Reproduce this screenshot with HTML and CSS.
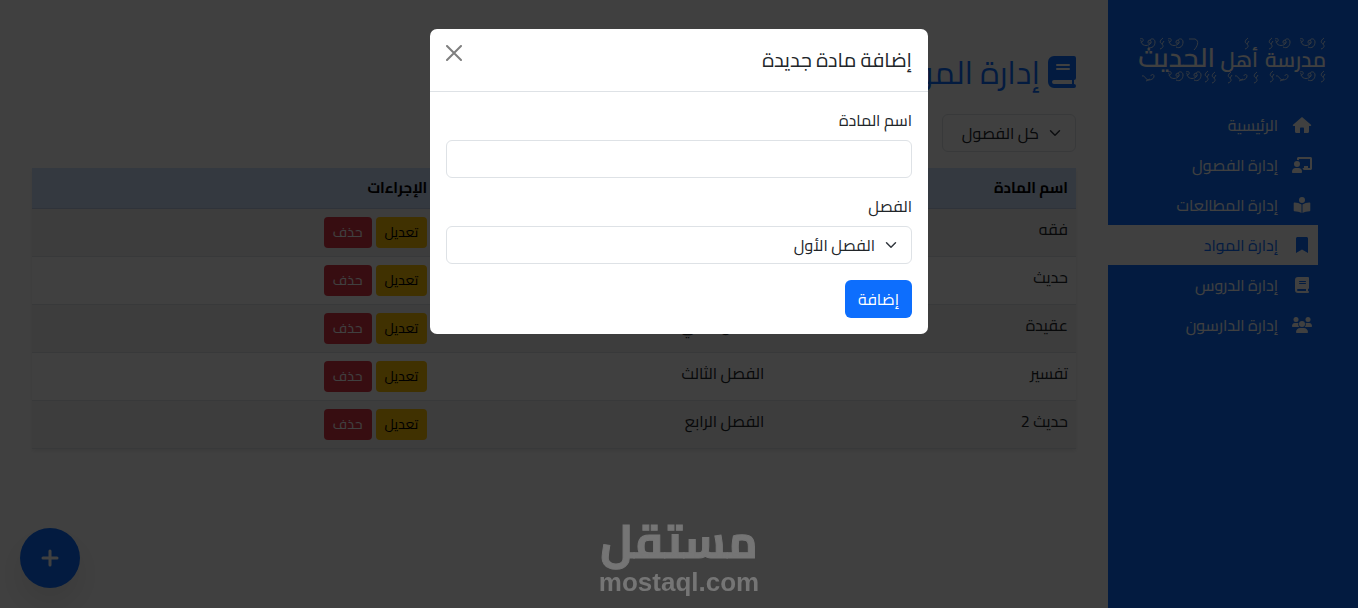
FILE: index.html
```html
<!DOCTYPE html>
<html lang="ar" dir="rtl">
<head>
    <meta charset="UTF-8">
    <meta name="viewport" content="width=device-width, initial-scale=1.0">
    <title>إدارة المواد</title>
    <link rel="stylesheet" href="styles.css">
</head>
<body>
    <div class="layout">
        <!-- Sidebar -->
        <aside class="sidebar">
            <svg class="brand" viewBox="0 0 190 50" role="img" aria-label="مدرسة أهل الحديث">
                <defs>
                    <g id="scroll">
                        <path d="M1 1c2-1 4 0 3 2s-3 0-2-1M2 4c2 5 8 4 10 1 1-3-3-4-3-1 0 2 2 2 2 0M9 9c4 2 7-1 7-5 0-4-5-4-5-1"/>
                    </g>
                    <g id="leaf">
                        <path d="M4 0C0 3 1 5 3 6c2 2 1 4-2 5M3 6l2-3"/>
                    </g>
                    <g id="swash">
                        <path d="M0 3c3-1 3 3 6 4 3 0 6-1 6-4 0-2-3-2-3 0M4 8l4-2"/>
                    </g>
                </defs>
                <g class="brand-text">
                    <text x="188" y="31">مدرسة</text>
                    <text x="120" y="31">أهل</text>
                    <text x="77" y="31" class="brand-wide">الحديث</text>
                </g>
                <g class="brand-lines">
                    <use href="#scroll" x="1" y="2"/>
                    <use href="#leaf" x="21" y="2"/>
                    <use href="#scroll" x="29" y="2"/>
                    <path d="M51 3h6c5 2 2 8-1 11"/>
                    <use href="#leaf" x="106" y="2"/>
                    <use href="#leaf" x="130" y="2"/>
                    <use href="#scroll" x="136" y="2"/>
                    <use href="#scroll" x="161" y="2"/>
                    <use href="#leaf" x="182" y="2"/>
                    <use href="#swash" x="4" y="37"/>
                    <use href="#scroll" x="29" y="35"/>
                    <use href="#scroll" x="47" y="35"/>
                    <use href="#leaf" x="66" y="35"/>
                    <use href="#leaf" x="73" y="36"/>
                    <use href="#leaf" x="89" y="36"/>
                    <use href="#swash" x="97" y="37"/>
                    <use href="#leaf" x="115" y="36"/>
                    <use href="#leaf" x="131" y="35"/>
                    <use href="#swash" x="138" y="37"/>
                    <use href="#scroll" x="161" y="35"/>
                    <use href="#leaf" x="182" y="35"/>
                </g>
            </svg>
            <nav>
                <ul class="menu">
                    <li>
                        <a href="#">
                            <svg class="menu-icon" viewBox="0 0 20 16"><path d="M10 0 1 7.8c-.5.5-.2 1.2.5 1.2H3v5.500c0 .9.600 1.500 1.500 1.500H8v-4.500c0-.5.400-1 1-1h2c.6 0 1 .5 1 1V16h3.500c.9 0 1.500-.6 1.500-1.500V9h1.500c.7 0 1-.7.5-1.200z"/></svg>
                            <span>الرئيسية</span>
                        </a>
                    </li>
                    <li>
                        <a href="#">
                            <svg class="menu-icon" viewBox="0 0 20 16"><path d="M5 1.500C5 .7 5.700 0 6.500 0h12c.8 0 1.500.7 1.500 1.500v10c0 .8-.7 1.500-1.500 1.500h-7c-.2-.8-.6-1.500-1.200-2H12V9h4v2h2V2H7v1.300C6.400 3 5.700 3 5 3zM5 4a3 3 0 1 1 0 6 3 3 0 0 1 0-6zM3.500 11h3C8.500 11 10 12.500 10 14.400c0 1-.3 1.600-1 1.600H1c-.7 0-1-.6-1-1.300C0 12.500 1.500 11 3.500 11z"/></svg>
                            <span>إدارة الفصول</span>
                        </a>
                    </li>
                    <li>
                        <a href="#">
                            <svg class="menu-icon" viewBox="0 0 20 16"><circle cx="10" cy="3" r="3"/><path d="M9.500 7.500V16C7.500 14.800 5 14.300 2.500 14.200c-.3 0-.8-.3-.8-.8V6.300c0-.5.400-.9.900-.8 2.400.1 5 .7 6.900 2zM10.500 7.500V16c2-1.200 4.500-1.700 7-1.800.3 0 .8-.3.8-.8V6.300c0-.5-.4-.9-.9-.8-2.400.1-5 .7-6.900 2z"/></svg>
                            <span>إدارة المطالعات</span>
                        </a>
                    </li>
                    <li>
                        <a href="#" class="active">
                            <svg class="menu-icon" viewBox="0 0 20 16"><path d="M4 1.500C4 .7 4.700 0 5.500 0h9c.8 0 1.500.7 1.500 1.500V16l-6-3.500L4 16z"/></svg>
                            <span>إدارة المواد</span>
                        </a>
                    </li>
                    <li>
                        <a href="#">
                            <svg class="menu-icon" viewBox="-3 0 20 16"><path fill-rule="evenodd" d="M3 0a3 3 0 0 0-3 3v10a3 3 0 0 0 3 3h10a1 1 0 0 0 0-2v-2a1 1 0 0 0 1-1V1a1 1 0 0 0-1-1zM3 12h8v2H3a1 1 0 0 1 0-2zM4.500 4h6a.5.5 0 0 1 0 1h-6a.5.5 0 0 1 0-1zM4.500 6h6a.5.5 0 0 1 0 1h-6a.5.5 0 0 1 0-1z"/></svg>
                            <span>إدارة الدروس</span>
                        </a>
                    </li>
                    <li>
                        <a href="#">
                            <svg class="menu-icon" viewBox="0 0 20 16"><circle cx="4" cy="2.500" r="2.500"/><circle cx="16" cy="2.500" r="2.500"/><circle cx="10" cy="7" r="3"/><path d="M2.700 6h2.600c.4 0 .8.1 1.200.3C5.800 7.800 6.500 9.300 7.300 10H.7C.3 10 0 9.700 0 9.300 0 7.500 1 6 2.700 6zM17.300 6h-2.600c-.4 0-.8.1-1.200.3.7 1.500 0 3-.8 3.700h6.600c.4 0 .7-.3.700-.7C20 7.500 19 6 17.300 6zM8.200 11h3.600c2.300 0 4.200 1.900 4.200 4.200 0 .5-.4.8-.8.8H4.800c-.4 0-.8-.3-.8-.8C4 12.900 5.900 11 8.200 11z"/></svg>
                            <span>إدارة الدارسون</span>
                        </a>
                    </li>
                </ul>
            </nav>
        </aside>

        <!-- Page content -->
        <main class="content">
            <h2 class="page-title">
                <svg class="title-icon" viewBox="0 0 14 16"><path fill-rule="evenodd" d="M3 0a3 3 0 0 0-3 3v10a3 3 0 0 0 3 3h10a1 1 0 0 0 0-2v-2a1 1 0 0 0 1-1V1a1 1 0 0 0-1-1zM3 12h9v2H3a1 1 0 0 1 0-2zM4.500 4h6a.5.5 0 0 1 0 1h-6a.5.5 0 0 1 0-1zM4.500 6h6a.5.5 0 0 1 0 1h-6a.5.5 0 0 1 0-1z"/></svg>
                <span>إدارة المواد</span>
            </h2>

            <select class="form-select filter" aria-label="كل الفصول">
                <option>كل الفصول</option>
            </select>

            <table class="table">
                <thead>
                    <tr>
                        <th>اسم المادة</th>
                        <th>الفصل</th>
                        <th>الإجراءات</th>
                    </tr>
                </thead>
                <tbody>
                    <tr>
                        <td>فقه</td>
                        <td>الفصل الأول</td>
                        <td>
                            <div class="actions">
                                <button class="btn btn-sm btn-warning">تعديل</button>
                                <button class="btn btn-sm btn-danger">حذف</button>
                            </div>
                        </td>
                    </tr>
                    <tr>
                        <td>حديث</td>
                        <td>الفصل الأول</td>
                        <td>
                            <div class="actions">
                                <button class="btn btn-sm btn-warning">تعديل</button>
                                <button class="btn btn-sm btn-danger">حذف</button>
                            </div>
                        </td>
                    </tr>
                    <tr>
                        <td>عقيدة</td>
                        <td>الفصل الثاني</td>
                        <td>
                            <div class="actions">
                                <button class="btn btn-sm btn-warning">تعديل</button>
                                <button class="btn btn-sm btn-danger">حذف</button>
                            </div>
                        </td>
                    </tr>
                    <tr>
                        <td>تفسير</td>
                        <td>الفصل الثالث</td>
                        <td>
                            <div class="actions">
                                <button class="btn btn-sm btn-warning">تعديل</button>
                                <button class="btn btn-sm btn-danger">حذف</button>
                            </div>
                        </td>
                    </tr>
                    <tr>
                        <td>حديث 2</td>
                        <td>الفصل الرابع</td>
                        <td>
                            <div class="actions">
                                <button class="btn btn-sm btn-warning">تعديل</button>
                                <button class="btn btn-sm btn-danger">حذف</button>
                            </div>
                        </td>
                    </tr>
                </tbody>
            </table>
        </main>
    </div>

    <button class="add-btn" aria-label="إضافة مادة">
        <svg viewBox="0 0 18 18"><path d="M9 2v14M2 9h14"/></svg>
    </button>

    <!-- Add subject modal -->
    <div class="backdrop">
        <div class="modal" role="dialog" aria-modal="true" aria-labelledby="modal-title">
            <div class="modal-header">
                <h5 class="modal-title" id="modal-title">إضافة مادة جديدة</h5>
                <button class="btn-close" aria-label="إغلاق">
                    <svg viewBox="0 0 16 16"><path d="M1 1l14 14M15 1 1 15"/></svg>
                </button>
            </div>
            <form class="modal-body">
                <div class="field">
                    <label for="subject-name">اسم المادة</label>
                    <input type="text" class="form-control" id="subject-name">
                </div>
                <div class="field">
                    <label for="subject-class">الفصل</label>
                    <select class="form-select" id="subject-class">
                        <option>الفصل الأول</option>
                        <option>الفصل الثاني</option>
                        <option>الفصل الثالث</option>
                        <option>الفصل الرابع</option>
                    </select>
                </div>
                <button type="button" class="btn btn-primary">إضافة</button>
            </form>
        </div>
    </div>

    <div class="watermark">
        <span class="watermark-ar">مستقل</span>
        <span class="watermark-en" dir="ltr">mostaql.com</span>
    </div>
</body>
</html>
```
FILE: styles.css
```css
* {
    box-sizing: border-box;
}

body {
    margin: 0;
    background-color: #ffffff;
    color: #212529;
    font-family: "Cairo", "DejaVu Sans", sans-serif;
    font-size: 16px;
    line-height: 24px;
}

button,
input,
select {
    font-family: inherit;
    font-size: inherit;
    line-height: inherit;
}

.layout {
    display: flex;
    min-height: 100vh;
}

/* Sidebar */
.sidebar {
    flex: 0 0 250px;
    padding-top: 36px;
    background-color: #0d6efd;
    color: #ffffff;
}

.brand {
    display: block;
    width: 190px;
    height: 50px;
    margin: 0 auto 19px;
    overflow: visible;
}

.brand-text {
    fill: #ffffff;
    font-size: 21px;
    font-weight: 600;
}

.brand-wide {
    font-size: 27px;
}

.brand-lines {
    fill: none;
    stroke: #ffffff;
    stroke-width: 1;
    opacity: 0.8;
}

.menu {
    list-style: none;
    margin: 0;
    padding: 0 40px 0 0;
}

.menu a {
    display: flex;
    align-items: center;
    gap: 14px;
    padding: 8px 6px;
    color: #ffffff;
    text-decoration: none;
}

.menu a.active {
    background-color: #ffffff;
    color: #0d6efd;
}

.menu-icon {
    width: 20px;
    height: 16px;
    fill: currentColor;
}

/* Content */
.content {
    flex: 1;
    padding: 48px 32px;
}

.page-title {
    display: flex;
    align-items: center;
    gap: 8px;
    margin: 0 0 18px;
    color: #0d6efd;
    font-size: 32px;
    font-weight: 400;
    line-height: 48px;
}

.title-icon {
    width: 28px;
    height: 32px;
    fill: currentColor;
}

.form-control,
.form-select {
    display: block;
    width: 100%;
    height: 38px;
    padding: 6px 12px;
    border: 1px solid #dee2e6;
    border-radius: 6px;
    background-color: #ffffff;
    color: #212529;
}

.form-select {
    appearance: none;
    padding: 6px 36px 6px 12px;
    background-image: url("data:image/svg+xml,%3csvg xmlns='http://www.w3.org/2000/svg' viewBox='0 0 16 16'%3e%3cpath fill='none' stroke='%23343a40' stroke-linecap='round' stroke-linejoin='round' stroke-width='2' d='m2 5 6 6 6-6'/%3e%3c/svg%3e");
    background-repeat: no-repeat;
    background-position: right 12px center;
    background-size: 16px 12px;
}

.filter {
    width: 134px;
    margin-bottom: 16px;
}

.table {
    width: 100%;
    border-collapse: collapse;
    box-shadow: 0 2px 4px rgba(0, 0, 0, 0.08);
}

.table th,
.table td {
    padding: 8px;
    border-bottom: 1px solid #dee2e6;
    text-align: right;
    vertical-align: top;
}

.table th {
    background-color: #cfe2ff;
    border-color: #bacbe6;
    color: #000000;
    font-size: 15px;
    font-weight: 700;
}

.table tbody tr:nth-child(odd) {
    background-color: #f2f2f2;
}

.actions {
    display: flex;
    gap: 4px;
}

.btn {
    padding: 6px 12px;
    border: 1px solid transparent;
    border-radius: 6px;
    cursor: pointer;
}

.btn-sm {
    padding: 4px 8px;
    border-radius: 4px;
    font-size: 14px;
    line-height: 21px;
}

.btn-primary {
    background-color: #0d6efd;
    color: #ffffff;
}

.btn-warning {
    background-color: #ffc107;
    color: #000000;
}

.btn-danger {
    background-color: #dc3545;
    color: #ffffff;
}

.add-btn {
    position: fixed;
    bottom: 20px;
    left: 20px;
    display: flex;
    align-items: center;
    justify-content: center;
    width: 60px;
    height: 60px;
    border: none;
    border-radius: 50%;
    background-color: #0d6efd;
    box-shadow: 0 16px 32px rgba(0, 0, 0, 0.1);
    cursor: pointer;
}

.add-btn svg {
    width: 18px;
    height: 18px;
    stroke: #ffffff;
    stroke-width: 3;
    stroke-linecap: round;
}

/* Modal */
.backdrop {
    position: fixed;
    inset: 0;
    padding: 29px 16px;
    background-color: rgba(0, 0, 0, 0.75);
}

.modal {
    max-width: 498px;
    margin: 0 auto;
    border-radius: 7px;
    background-color: #ffffff;
}

.modal-header {
    display: flex;
    align-items: flex-start;
    justify-content: space-between;
    padding: 16px;
    border-bottom: 1px solid #dee2e6;
}

.modal-title {
    margin: 0;
    font-size: 20px;
    font-weight: 400;
    line-height: 30px;
}

.btn-close {
    padding: 0;
    border: none;
    background: none;
    line-height: 0;
    cursor: pointer;
}

.btn-close svg {
    width: 16px;
    height: 16px;
    stroke: #7f7f7f;
    stroke-width: 2;
    stroke-linecap: round;
}

.modal-body {
    padding: 16px;
}

.field {
    margin-bottom: 16px;
}

.field label {
    display: block;
    margin-bottom: 8px;
}

/* Watermark */
.watermark {
    position: fixed;
    bottom: 14px;
    left: 0;
    right: 0;
    display: flex;
    flex-direction: column;
    align-items: center;
    color: #757575;
    font-weight: 700;
    pointer-events: none;
}

.watermark-ar {
    font-size: 46px;
    line-height: 58px;
    -webkit-text-stroke: 1px #757575;
}

.watermark-en {
    font-family: "Liberation Sans", Arial, sans-serif;
    font-size: 26px;
    line-height: 24px;
}
```
